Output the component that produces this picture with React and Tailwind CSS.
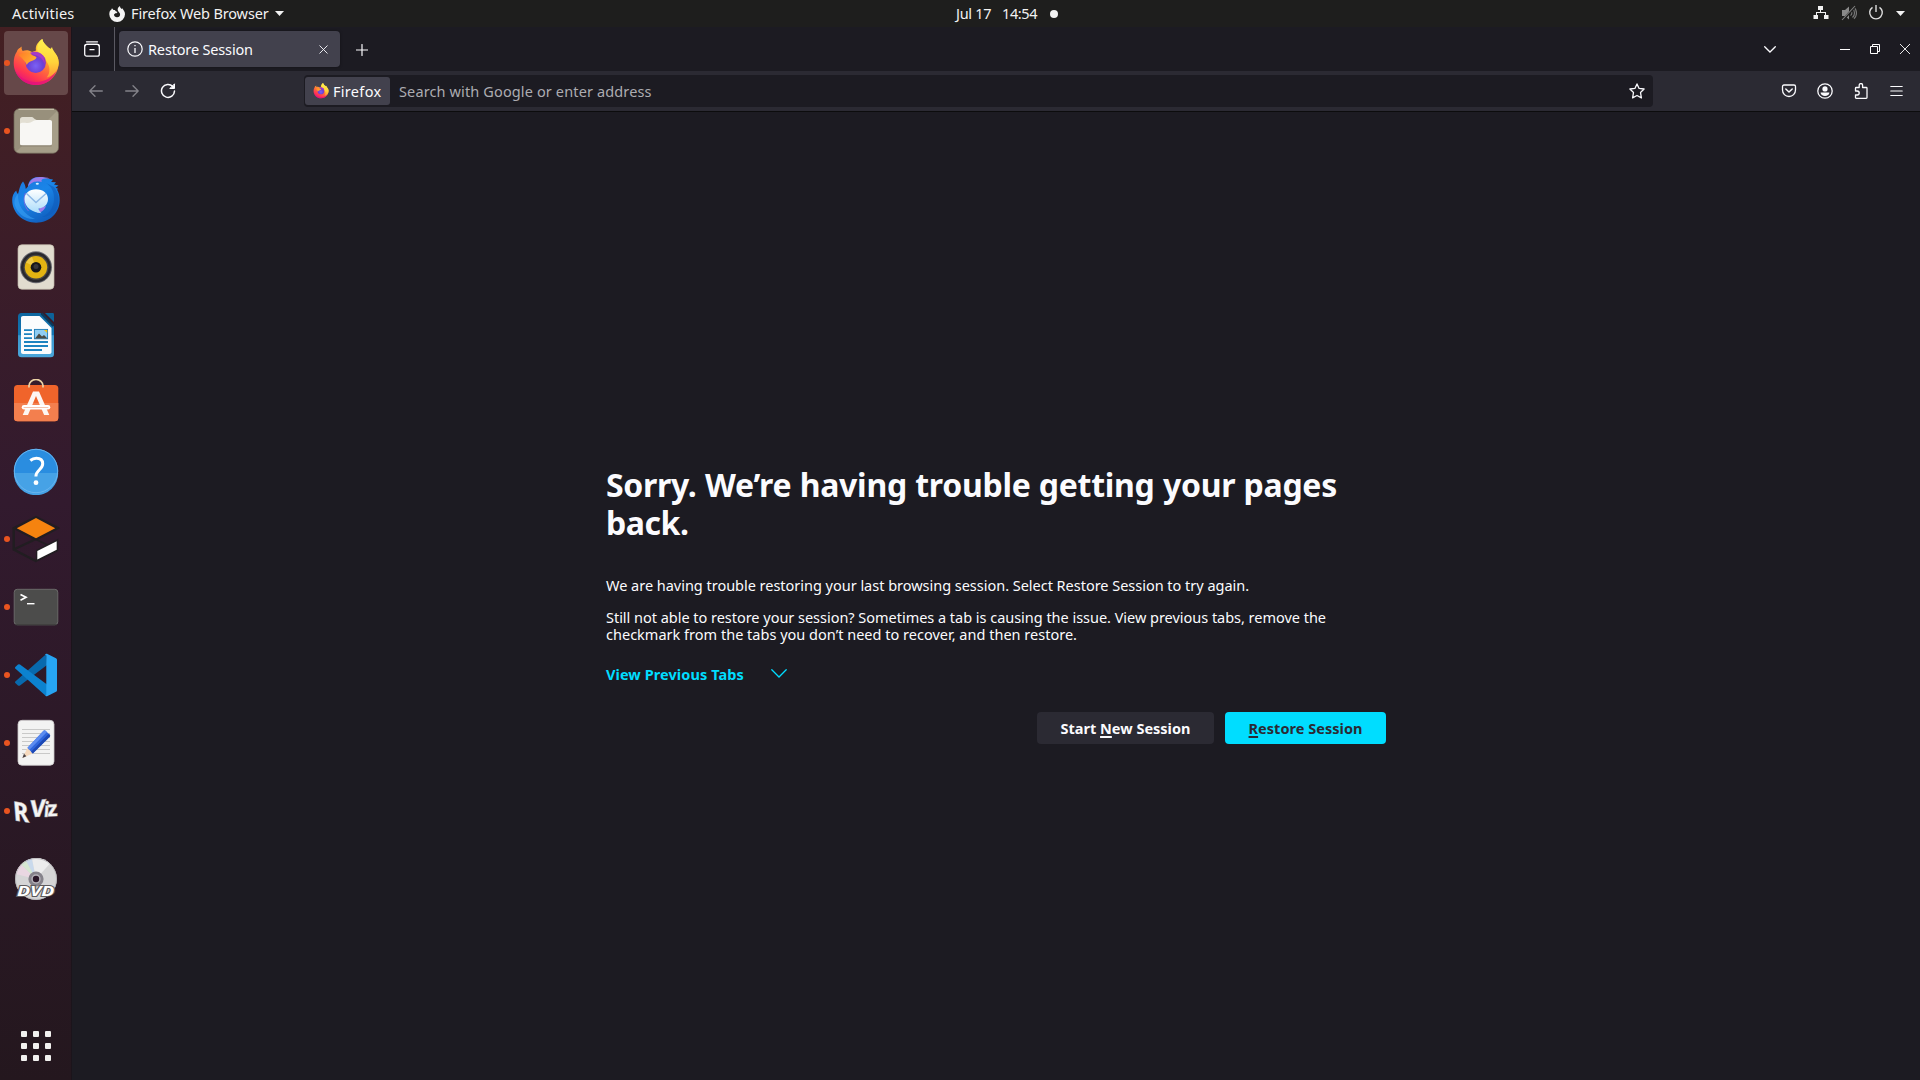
function FirefoxLogo({ size, id }) {
  return (
    <svg width={size} height={size} viewBox="0 0 48 48" className="shrink-0">
      <defs>
        <linearGradient id={`${id}-body`} x1="0.85" y1="0.05" x2="0.3" y2="1">
          <stop offset="0" stopColor="#fff44f" />
          <stop offset="0.3" stopColor="#ffbd2e" />
          <stop offset="0.55" stopColor="#ff7139" />
          <stop offset="0.8" stopColor="#ff3750" />
          <stop offset="1" stopColor="#e5127c" />
        </linearGradient>
        <radialGradient id={`${id}-globe`} cx="0.5" cy="0.65" r="0.65">
          <stop offset="0" stopColor="#7a62f5" />
          <stop offset="0.55" stopColor="#6d42d6" />
          <stop offset="1" stopColor="#a02bb4" />
        </radialGradient>
        <linearGradient id={`${id}-flame`} x1="0.5" y1="0" x2="0.5" y2="1">
          <stop offset="0" stopColor="#fff250" />
          <stop offset="0.6" stopColor="#ffd43a" />
          <stop offset="1" stopColor="#ff9a35" />
        </linearGradient>
        <linearGradient id={`${id}-head`} x1="0" y1="0" x2="1" y2="0.5">
          <stop offset="0" stopColor="#ff7a28" />
          <stop offset="1" stopColor="#ffb02e" />
        </linearGradient>
      </defs>
      <path
        d="M9.7 7.5c-.4 2 0 3.300 1 4.500C14 10.500 17 11 20 13l4-1.500c-1-4.500 2-8.700 6.300-11.500.6 3.500 3.200 5.600 6 8.500 2.200 1.300 4 2 5.200 4.500C45 15.500 46.700 19 46.700 23.500 46.700 36 36.500 46 24 46S1.700 36 1.700 24c0-4.600 1-8.300 3.200-11.500C5.300 10.500 7.500 9 9.700 7.500Z"
        fill={`url(#${id}-body)`}
      />
      <path d="M3 31c4 8 12 12 21 12 9.500 0 17-5 20.500-12C42 40 34 46 24 46S6 40 3 31Z" fill="#e2107f" opacity=".75" />
      <path
        d="M30.300 0c.6 3.500 3.200 5.600 6 8.500l2.200 1.500 1.500-2c.5 4 6.700 8 6.700 16-.2 7-5 13-12 14.500 3-3.500 3.700-9 1.300-13.500-2-4.500-5.500-8-9-10-3.500-4.500-1.500-11.500 3.300-15Z"
        fill={`url(#${id}-flame)`}
      />
      <circle cx="23.700" cy="23.800" r="10.200" fill={`url(#${id}-globe)`} />
      <path d="M17 14.500c4-2.500 9-2 12.500.5l4 4.500-2-.5c.8 1.500 1.500 4 1.200 6-1.500-5-5-8-9.700-9Z" fill="#a63bc6" />
      <path
        d="M6.500 16c3-2.500 8-3 12-1.800.6 1.300 1.500 2 4 2.800 1.200.5 1.900 1.200 2 1.700-.8 2-3.500 2.800-6.200 3.800-1.800.8-3 2-3.500 3.500-1-2.500-2.500-5-8.300-10Z"
        fill={`url(#${id}-head)`}
      />
    </svg>
  );
}

function FirefoxDockIcon() {
  return <FirefoxLogo size={48} id="ff-dock" />;
}

function FilesIcon() {
  return (
    <svg width="48" height="48" viewBox="0 0 48 48">
      <defs>
        <linearGradient id="files-bg" x1="0" y1="0" x2="1" y2="1">
          <stop offset="0.5" stopColor="#98907c" />
          <stop offset="0.52" stopColor="#a69e89" />
        </linearGradient>
      </defs>
      <rect x="2" y="1.700" width="44.500" height="44.500" rx="5.500" fill="url(#files-bg)" stroke="#6f6858" strokeWidth=".7" />
      <path d="M6.500 2.300h35.500" stroke="#c4bca6" strokeWidth="1.200" />
      <path d="M8 12.500C8 11 9 10 10.500 10h9.500c1.600 0 2.500 2.800 4.300 2.800V20H8Z" fill="#e3dfd3" />
      <path d="M8 17c1.500-1.800 3-1 8-1 4 0 5-3 8.500-3H38c1.300 0 2 .8 2 2v21.500c0 1.300-.8 2-2 2H10c-1.300 0-2-.8-2-2Z" fill="#f8f7f4" />
      <path d="M8.500 38.900h31" stroke="#7d7563" strokeWidth=".8" />
    </svg>
  );
}

function ThunderbirdIcon() {
  return (
    <svg width="48" height="48" viewBox="0 0 48 48">
      <defs>
        <linearGradient id="tb-body" x1="0" y1="0" x2="0.6" y2="1">
          <stop offset="0" stopColor="#1b76dc" />
          <stop offset="0.5" stopColor="#1a85e8" />
          <stop offset="1" stopColor="#1160c0" />
        </linearGradient>
        <linearGradient id="tb-mail" x1="0" y1="0" x2="0" y2="1">
          <stop offset="0" stopColor="#ffffff" />
          <stop offset="1" stopColor="#a9dcfb" />
        </linearGradient>
      </defs>
      <path
        d="M11 6.500c-3.500 4-3.500 8.500-5 12.500-1-1-1.500-2-1.800-3.500C1.500 18 .2 21 .2 25c0 13 11 22.700 24 22.700S47.700 38 47.700 25c0-4-.8-7-2.700-10.500l1.500-.5-3-1.300 3-2.200-4.500-1 2-2.300-5-.2c1-1 1.500-1.800 2-2.500l-5-.7C33.500 2.600 30 2 26 2 20.500 2 16.500 5.500 16 11.500L13.800 14C13.500 11 12.500 8 11 6.500Z"
        fill="url(#tb-body)"
      />
      <path d="M28 2c-6 0-10.500 3-12 9.500 3-3.500 5-4.800 9-5 2.500 0 3.500.5 5 0C28.500 5 30 3 38 3.500 35 2.500 31 2 28 2Z" fill="#9c7be8" />
      <path d="M34 8c6 4 8.500 9 8 17-.5 8-5 14-12 17 8-.5 14-5 16-12 1.500-7 0-13-4-18Z" fill="#0f5cba" opacity=".6" />
      <path d="M6 19c-.5 11 5 20 17 25-9 1-18-5-20.500-15C2 25 3.500 21 6 19Z" fill="#3aa0f4" opacity=".6" />
      <path d="M13.500 18c-2.500 6-1.500 13 3 18" fill="none" stroke="#7b6ae0" strokeWidth="1" />
      <path d="M34 31c-2 5-6 7-9.500 7 2-1.500 3-3 3-5Z" fill="#a07cec" />
      <path d="M24 14.300c7 0 12 4 12 9.700 0 6-5 9.500-9.500 9.500.3 2 1.500 3.800 3 4.700-8.500-.5-17-5.700-17-14 0-6 5-9.900 11.500-9.900Z" fill="url(#tb-mail)" />
      <path d="M14.500 18.500 24 27.500 34 18.500" fill="none" stroke="#8cb8e6" strokeWidth="1.400" />
      <ellipse cx="25.300" cy="8.700" rx="1.600" ry="1" fill="#d8f1ff" />
    </svg>
  );
}

function RhythmboxIcon() {
  return (
    <svg width="48" height="48" viewBox="0 0 48 48">
      <rect x="6" y="1.700" width="36" height="44.600" rx="4" fill="#e1dccf" stroke="#bdb6a7" strokeWidth=".7" />
      <circle cx="24" cy="24.300" r="16" fill="#6b6b72" />
      <circle cx="24" cy="24.300" r="15" fill="#28282d" />
      <circle cx="24" cy="24.300" r="12.500" fill="#4a4845" />
      <circle cx="24" cy="24.300" r="11.200" fill="#e3b412" />
      <path d="M24 24.300 14 19.500a11.200 11.200 0 0 1 6-5.500Z" fill="#f6d96b" opacity=".6" />
      <circle cx="24" cy="24.300" r="5.300" fill="#17171a" />
      <circle cx="24" cy="23.500" r="2.500" fill="#37373b" />
    </svg>
  );
}

function WriterIcon() {
  return (
    <svg width="48" height="48" viewBox="0 0 48 48">
      <defs>
        <linearGradient id="writer-bg" x1="0" y1="0" x2="0" y2="1">
          <stop offset="0" stopColor="#0d669f" />
          <stop offset="0.5" stopColor="#1477b4" />
          <stop offset="0.51" stopColor="#3a97cd" />
          <stop offset="1" stopColor="#4aa6da" />
        </linearGradient>
      </defs>
      <path d="M9.500 2h19L42 15.500V43a3.300 3.300 0 0 1-3.300 3.300H9.500A3.500 3.500 0 0 1 6 43V5.500A3.500 3.500 0 0 1 9.500 2Z" fill="url(#writer-bg)" />
      <path d="M33 2h7.500c1 0 1.500.5 1.500 1.500V11Z" fill="#0d6299" />
      <path d="m29.500 2.500 12 12.500" stroke="#0b3a5d" strokeWidth="2.500" />
      <path d="M11 5h16.500L39.500 17v24c0 1.200-.8 2-2 2H11c-1.200 0-2-.8-2-2V7c0-1.200.8-2 2-2Z" fill="#fbfcfd" />
      <path d="M12 19.200h8M12 23.200h8M12 27.200h8M12 31h24M12 35h24M12 39h18" stroke="#1c83c0" strokeWidth="1.800" />
      <rect x="22.400" y="18.400" width="13.200" height="9.400" fill="#8fcdf2" stroke="#1878b4" strokeWidth=".9" />
      <path d="m23 27.500 4-5 3 3 2-1.500 3.500 3.500Z" fill="#4a4a42" />
      <path d="M32 19h3.200v3Z" fill="#f4c20d" />
    </svg>
  );
}

function SoftwareIcon() {
  return (
    <svg width="48" height="48" viewBox="0 0 48 48">
      <path d="M17 8.500V7a7 6.500 0 0 1 14 0v1.500" fill="none" stroke="#ecd3a6" strokeWidth="1.700" />
      <rect x="2" y="6" width="44.300" height="36.300" rx="3.500" fill="#f0642b" />
      <path d="M2 24h44.300v14.800a3.500 3.500 0 0 1-3.500 3.500H5.500A3.500 3.500 0 0 1 2 38.800Z" fill="#f37f4e" />
      <path d="M17 6v2.500M31 6v2.500" stroke="#ecd3a6" strokeWidth="1.700" />
      <path d="M21 12.500h6L37.300 36h-5.200L24 17 16 36h-5.300Z" fill="#fdf6f2" />
      <path d="M12 28.300h24" stroke="#fff" strokeWidth="4.500" strokeLinecap="round" />
      <path d="M12 28.500h24" stroke="#f6c4ae" strokeWidth="1" strokeLinecap="round" />
    </svg>
  );
}

function HelpIcon() {
  return (
    <svg width="48" height="48" viewBox="0 0 48 48">
      <circle cx="24" cy="24" r="22.200" fill="#2a8de0" />
      <path d="M1.800 26h44.400a22.200 22.200 0 0 1-44.400 0Z" fill="#46a2e6" />
      <circle cx="24" cy="24" r="21.700" fill="none" stroke="#68b4ee" strokeWidth="1" />
      <path d="M18.300 13.500c2-1.600 4-2.200 6-2.200 4 0 6.400 2 6.400 5.500 0 6-6.800 6-6.800 12.700" fill="none" stroke="#fff" strokeWidth="3" />
      <circle cx="24" cy="35.700" r="2.400" fill="#fff" />
    </svg>
  );
}

function GazeboIcon() {
  return (
    <svg width="48" height="48" viewBox="0 0 48 48">
      <path
        d="M1.700 13v21.500L24.300 46.300M1.700 34.500 24 24M24 2 2 13l22 11.500L46 13Z"
        fill="none"
        stroke="#211d21"
        strokeWidth="2.400"
      />
      <path d="M24 24.500 38 31" stroke="#211d21" strokeWidth="1.600" />
      <path d="M25 35.500 45.500 25v10.500L24.500 46Z" fill="#211d21" stroke="#211d21" strokeWidth="1.500" />
      <path d="M24 3 43.200 13.200 24 23.200 4.800 13.200Z" fill="#f5830f" />
      <path d="M25.300 36 44.700 26.200v8.500L25.300 44.500Z" fill="#fff" />
    </svg>
  );
}

function TerminalIcon() {
  return (
    <svg width="48" height="48" viewBox="0 0 48 48">
      <rect x="2.200" y="6.300" width="43.600" height="35.500" rx="3" fill="#4c4c4b" stroke="#6e6e6d" strokeWidth=".9" />
      <path d="M3 41.800h42" stroke="#353534" strokeWidth="1" />
      <path d="m8.500 11.500 5.500 2.800-5.500 2.900" fill="none" stroke="#fff" strokeWidth="1.700" />
      <path d="M15 20.700h7.500" stroke="#fff" strokeWidth="1.400" />
    </svg>
  );
}

function CodeIcon() {
  return (
    <svg width="48" height="48" viewBox="0 0 48 48">
      <path d="M34 3.200 3.300 30.500q-.8.800 0 1.600L6 34.400q1 .7 2 0L35 14Z" fill="#0869ad" />
      <path d="M8 13.600q-1-.7-2 0L3.300 16q-.8.800 0 1.600L33 44.300q1 .7 2 .2V33.500Z" fill="#0c82cf" />
      <path d="M35 2.800 44 7.200q1 .6 1 1.600v30.400q0 1-1 1.600L35 45.200q-1.500.3-2-.9.800.3 1.300-.6V4.500q-.5-1-1.300-.7.500-1.200 2-1Z" fill="#27a4f2" />
    </svg>
  );
}

function EditorIcon() {
  return (
    <svg width="48" height="48" viewBox="0 0 48 48">
      <rect x="6" y="1.300" width="36" height="45" rx="4" fill="#f3f3f2" stroke="#c9c7c8" strokeWidth=".8" />
      <path d="M10 10.500h28M10 14.500h28M10 18.500h28M10 22.500h28M10 26.500h28M10 30.500h28M10 34.500h28" stroke="#c9c9c8" strokeWidth="1" />
      <path d="M15.500 28.700 20.500 34.500 10.500 39Z" fill="#f6d9bd" />
      <path d="m12 34.800 2.400 2.500-4 1.700Z" fill="#4a4244" />
      <path d="M15.500 28.700 31.500 11.700q1-.8 2 0l4.300 4q.8 1 0 2L20.800 34.500Z" fill="#2f66dc" />
      <path d="M15.500 28.700 31.500 11.700l1.700-.2 1.800 1.600L17.200 30.900Z" fill="#5c8cf0" />
      <path d="M19 32.700 36.500 15l1.300.8q.8 1 0 2L20.800 34.500Z" fill="#1d49b5" />
    </svg>
  );
}

function RvizIcon() {
  return (
    <svg width="48" height="48" viewBox="0 0 48 48">
      <g fontFamily="'Noto Sans', sans-serif" fontWeight="800" fill="#f4f4f4" stroke="#a39fa4" strokeWidth=".4">
        <text transform="matrix(.86 .12 .08 1 2 33.500)" fontSize="27">R</text>
        <text transform="matrix(.98 -.08 -.06 1 17.500 30.500)" fontSize="24">V</text>
        <text transform="matrix(.8 0 -.08 1 31.500 29.500)" fontSize="21">i</text>
        <text transform="matrix(.95 -.04 .05 1 35.500 29.500)" fontSize="22">z</text>
      </g>
    </svg>
  );
}

function DvdIcon() {
  return (
    <svg width="48" height="48" viewBox="0 0 48 48">
      <circle cx="24" cy="24" r="20.900" fill="#d5d5d6" />
      <path d="M24 24 3.700 19A21 21 0 0 1 9 9.300Z" fill="#e9d7e2" />
      <path d="M24 24 9 9.300A21 21 0 0 1 14 5.600Z" fill="#d6e8d2" />
      <path d="M24 24 14 5.600A21 21 0 0 1 20 3.500Z" fill="#c9d9ec" />
      <path d="M24 24 20 3.500A21 21 0 0 1 38 8.500Z" fill="#ececed" />
      <circle cx="24" cy="24" r="20.500" fill="none" stroke="#b4b4b6" strokeWidth=".8" />
      <circle cx="24" cy="24" r="7.600" fill="#85828a" />
      <circle cx="24" cy="24" r="4.700" fill="#b4b1b8" />
      <circle cx="24" cy="24" r="3.200" fill="#2b1829" />
      <text
        x="5"
        y="41"
        textLength="37.500"
        lengthAdjust="spacingAndGlyphs"
        fontFamily="'Noto Sans', sans-serif"
        fontWeight="700"
        fontStyle="italic"
        fontSize="13.500"
        fill="#fff"
        stroke="#5c5a5c"
        strokeWidth="1.800"
        paintOrder="stroke"
      >
        DVD
      </text>
    </svg>
  );
}

const DOCK_APPS = [
  { name: 'Firefox', Icon: FirefoxDockIcon, running: true, active: true },
  { name: 'Files', Icon: FilesIcon, running: true },
  { name: 'Thunderbird', Icon: ThunderbirdIcon },
  { name: 'Rhythmbox', Icon: RhythmboxIcon },
  { name: 'Writer', Icon: WriterIcon },
  { name: 'Software', Icon: SoftwareIcon },
  { name: 'Help', Icon: HelpIcon },
  { name: 'Gazebo', Icon: GazeboIcon, running: true },
  { name: 'Terminal', Icon: TerminalIcon, running: true },
  { name: 'Code', Icon: CodeIcon, running: true },
  { name: 'Text Editor', Icon: EditorIcon, running: true },
  { name: 'RViz', Icon: RvizIcon, running: true },
  { name: 'DVD', Icon: DvdIcon },
];

function Dock() {
  return (
    <nav className="flex w-[72px] shrink-0 flex-col border-r border-[#1b141b] bg-linear-to-b from-[#441f22] via-[#321a2e] via-45% to-[#24171e] pt-1">
      <div className="flex flex-col gap-1">
        {DOCK_APPS.map(({ name, Icon, running, active }) => (
          <div key={name} className="relative flex h-16 w-full items-center pl-1" aria-label={name}>
            <div className={active ? 'flex size-16 items-center justify-center rounded bg-[#664849]' : 'flex size-16 items-center justify-center'}>
              <Icon />
            </div>
            {running && <span className="absolute top-[29px] left-1 size-1.5 rounded-full bg-[#e95420]" />}
          </div>
        ))}
      </div>
      <div className="mt-auto mb-[19px] ml-[21px] grid grid-cols-3 gap-1.5 self-start">
        {Array.from({ length: 9 }, (_, i) => (
          <span key={i} className="size-1.5 rounded-[1px] bg-[#f2f1ef]" />
        ))}
      </div>
    </nav>
  );
}

function TopBar() {
  return (
    <header className="flex h-[27px] shrink-0 items-center bg-[#1e1e1d] leading-[27px] text-[#f2f2f2]">
      <span className="ml-3 w-[97px] tracking-[0.2px]">Activities</span>
      <svg width="16" height="16" viewBox="0 0 16 16" fill="#f4f4f4">
        <path d="M3 2.200 4.500 4h1.300l1 1.300L8.500 6 7.500 7.200H6.300L5 8.500c0 1.700 1.400 2.800 3 2.800a3 3 0 0 0 3.100-3C11.100 6.500 9 6 8.700 4 8.500 2.300 9.500 1 11 0c0 1.500.7 2 1.700 3l.8-.7c.2 1 1 1.600 1.600 2.700.6 1 .9 2 .9 3.300A7.800 7.800 0 0 1 8.100 16 7.800 7.800 0 0 1 .3 8.300C.3 6 1 4.500 1.600 3.700V5Z" />
      </svg>
      <span className="ml-1.5 w-[144px] tracking-[-0.14px]">Firefox Web Browser</span>
      <svg width="10" height="5" viewBox="0 0 10 5" fill="#f2f2f2">
        <path d="M0 0h9L4.500 5Z" />
      </svg>
      <span className="ml-[671px] w-[46px] tracking-[-0.3px]">Jul 17</span>
      <span className="w-[48px] tracking-[-0.4px]">14:54</span>
      <span className="size-2 rounded-full bg-[#f2f2f2]" />
      <div className="mr-[15px] ml-auto flex items-center">
        <svg width="16" height="16" viewBox="0 0 16 16" className="mr-3 -mt-0.5" fill="#f2f2f2">
          <path d="M5 1h5v4H8v2h5v3h2.500v4H11v-4h1V8H4v2h1v4H.500v-4H3V7h4V5H5Z" />
        </svg>
        <svg width="16" height="16" viewBox="0 0 16 16" className="mr-[11px] -mt-0.5" fill="#8a8a8a">
          <path d="M1 5h3l4-3.500v13L4 11H1Z" />
          <path d="M9.500 5.500a3 3 0 0 1 0 5M11.500 3.500a6 6 0 0 1 0 9M13 2.200a8 8 0 0 1 0 11.600" fill="none" stroke="#777" strokeWidth="1.200" />
          <path d="M14.500 1 1.500 15.500" stroke="#1e1e1d" strokeWidth="2.500" />
          <path d="M14 1 1 15" stroke="#858585" strokeWidth="1.100" />
        </svg>
        <svg width="16" height="16" viewBox="0 0 16 16" className="mr-3 -mt-0.5" fill="none" stroke="#dedede" strokeWidth="1.400">
          <path d="M4.500 2.300a6.300 6.300 0 1 0 7 0M8 0v7" />
        </svg>
        <svg width="9" height="5" viewBox="0 0 9 5" fill="#f2f2f2">
          <path d="M0 0h9L4.500 5Z" />
        </svg>
      </div>
    </header>
  );
}

function TabStrip() {
  return (
    <div className="flex h-11 items-center bg-[#1c1b22] text-[#fbfbfe]">
      <svg width="16" height="16" viewBox="0 0 16 16" className="ml-3" fill="none" stroke="#fbfbfe" strokeWidth="1.300">
        <path d="M2.500.8h11" strokeLinecap="round" />
        <rect x=".7" y="3.400" width="14.600" height="11.800" rx="2" />
        <path d="M1 5.200C1 4 2 3.400 3 3.400h10c1 0 2 .6 2 1.800" />
        <path d="M6 8.700h4" strokeLinecap="round" />
      </svg>
      <span className="ml-3.5 h-11 w-px bg-[#5a5962]" />
      <div className="ml-1 flex h-9 w-[221px] items-center rounded bg-[#42414d] pl-2 shadow-[0_0_3px_rgba(0,0,0,0.4)]">
        <svg width="16" height="16" viewBox="0 0 16 16" fill="none" stroke="#fbfbfe" strokeWidth="1.200">
          <circle cx="8" cy="8" r="7.200" />
          <path d="M8 7v5M8 4v1.300" strokeWidth="1.300" />
        </svg>
        <span className="ml-[5px] w-[167px] pt-0.5 tracking-[-0.16px]">Restore Session</span>
        <svg width="9" height="9" viewBox="0 0 9 9" stroke="#fbfbfe" strokeWidth=".9" className="ml-1">
          <path d="m.5.5 8 8M8.500.5l-8 8" />
        </svg>
      </div>
      <svg width="12" height="12" viewBox="0 0 12 12" stroke="#fbfbfe" strokeWidth="1.200" className="mt-px ml-4" strokeLinecap="round">
        <path d="M6 .5v11M.500 6h11" />
      </svg>
      <div className="mr-2.5 ml-auto flex items-center">
        <svg width="12" height="7" viewBox="0 0 12 7" fill="none" stroke="#fbfbfe" strokeWidth="1.300" strokeLinecap="round" className="mr-16">
          <path d="m.7.7 5.300 5.300L11.300.7" />
        </svg>
        <span className="mr-5 h-px w-2.5 bg-white" />
        <svg width="10" height="10" viewBox="0 0 10 10" fill="none" stroke="#fff" className="mr-5">
          <path d="M.5 2.500h7v7h-7ZM2.500 2.500v-2h7v7h-2" />
        </svg>
        <svg width="10" height="10" viewBox="0 0 10 10" stroke="#fff" strokeWidth=".9">
          <path d="m0 0 10 10M10 0 0 10" />
        </svg>
      </div>
    </div>
  );
}

function Toolbar() {
  return (
    <div className="flex h-[41px] items-center border-b border-[#0c0c0d] bg-[#2b2a33] text-[#fbfbfe]">
      <svg width="14" height="12" viewBox="0 0 14 12" fill="none" stroke="#84838a" strokeWidth="1.300" strokeLinecap="round" strokeLinejoin="round" className="ml-[17px]">
        <path d="M13.300 6H.8M6 .7.800 6 6 11.300" />
      </svg>
      <svg width="14" height="12" viewBox="0 0 14 12" fill="none" stroke="#84838a" strokeWidth="1.300" strokeLinecap="round" strokeLinejoin="round" className="ml-[22px]">
        <path d="M.7 6h12.500M8 .7 13.200 6 8 11.300" />
      </svg>
      <svg width="16" height="16" viewBox="0 0 16 16" fill="none" stroke="#fbfbfe" strokeWidth="1.500" strokeLinecap="round" strokeLinejoin="round" className="ml-[21px]">
        <path d="M12.800 3.500A6.500 6.500 0 1 0 14.500 8" />
        <path d="M14.500 1.200v4.300h-4.300Z" fill="#fbfbfe" strokeWidth="1" />
      </svg>
      <div className="ml-32 flex h-8 w-[1349px] items-center rounded bg-[#1c1b22] pr-2">
        <div className="ml-px flex h-7 w-[85px] items-center rounded-[3px] bg-[#42414d] pl-2">
          <FirefoxLogo size={16} id="ff-chip" />
          <span className="ml-1 pt-0.5 tracking-[0.3px]">Firefox</span>
        </div>
        <span className="ml-[9px] pt-0.5 tracking-[0.13px] text-[#acacb1]">Search with Google or enter address</span>
        <svg width="16" height="16" viewBox="0 0 16 16" fill="none" stroke="#fbfbfe" strokeWidth="1.300" strokeLinejoin="round" className="ml-auto">
          <path d="m8 .900 2.100 4.500 5 .600-3.600 3.500.9 5.400L8 12.500l-4.400 2.400.9-5.400L.9 6l5-.6Z" />
        </svg>
      </div>
      <div className="mr-[17px] ml-auto flex items-center">
        <svg width="16" height="16" viewBox="0 0 16 16" fill="none" stroke="#fbfbfe" strokeWidth="1.300" strokeLinecap="round" strokeLinejoin="round" className="mr-5">
          <path d="M3 2h10c.9 0 1.500.6 1.500 1.500V7a6.500 6.500 0 0 1-13 0V3.500C1.500 2.600 2.100 2 3 2Z" />
          <path d="M4.800 6 8 9l3.200-3" strokeWidth="1.500" />
        </svg>
        <svg width="16" height="16" viewBox="0 0 16 16" className="mr-5">
          <circle cx="8" cy="8" r="7.200" fill="none" stroke="#fbfbfe" strokeWidth="1.300" />
          <circle cx="8" cy="5.900" r="2.600" fill="#fbfbfe" />
          <path d="M3.600 9.500h8.800c0 2-2 3.600-4.400 3.600S3.600 11.500 3.600 9.500Z" fill="#fbfbfe" />
        </svg>
        <svg width="16" height="16" viewBox="0 0 16 16" fill="none" stroke="#fbfbfe" strokeWidth="1.300" strokeLinejoin="round" className="mr-[21px]">
          <path d="M2.500 8V5.200c0-.4.300-.7.700-.7h3V2.200a1.700 1.700 0 0 1 3.400 0v2.300h3.600c.5 0 .8.300.8.700v9.300c0 .5-.3.800-.8.800H3.300c-.5 0-.8-.3-.8-.8V12h1.700c2.700-.2 2.700-3.800 0-4Z" />
        </svg>
        <svg width="13" height="12" viewBox="0 0 13 12" stroke="#fbfbfe" strokeWidth="1.200" strokeLinecap="round" className="-mt-px">
          <path d="M.8 1.500h11.400M.8 6h11.400M.8 10.500h11.400" />
        </svg>
      </div>
    </div>
  );
}

function RestorePage() {
  return (
    <main className="flex-1 bg-[#1c1b22] pt-[354px] pl-[534px] leading-[17px] whitespace-nowrap text-[#fbfbfe]">
      <div className="w-[780px]">
        <h1 className="text-[32px] leading-[38px] font-bold">
          <span className="block tracking-[-0.29px] [word-spacing:0.4px]">Sorry. We’re having trouble getting your pages</span>
          <span className="block tracking-[-0.45px]">back.</span>
        </h1>
        <p className="mt-[35px] tracking-[-0.02px]">
          We are having trouble restoring your last browsing session. Select Restore Session to try again.
        </p>
        <p className="mt-[15px]">
          <span className="block tracking-[-0.025px]">
            Still not able to restore your session? Sometimes a tab is causing the issue. View previous tabs, remove the
          </span>
          <span className="block tracking-[0.01px]">checkmark from the tabs you don’t need to recover, and then restore.</span>
        </p>
        <button className="mt-[23px] flex items-center font-bold tracking-[0.08px] text-[#00ddff]">
          <span className="w-[165px] text-left">View Previous Tabs</span>
          <svg width="16" height="9" viewBox="0 0 16 9" fill="none" stroke="#00ddff" strokeWidth="1.300" strokeLinecap="round" className="-mt-0.5">
            <path d="m.8.8 7.200 7.200 7.200-7.200" />
          </svg>
        </button>
        <div className="mt-[29px] flex justify-end gap-[11px] font-bold">
          <button className="h-8 w-[177px] rounded bg-[#2b2a33]">
            Start <span className="underline decoration-2 underline-offset-2">N</span>ew Session
          </button>
          <button className="h-8 w-[161px] rounded bg-[#00ddff] tracking-[0.03px] text-[#2b2a33]">
            <span className="underline decoration-2 underline-offset-2">R</span>estore Session
          </button>
        </div>
      </div>
    </main>
  );
}

export default function App() {
  return (
    <div className="flex h-[1080px] w-[1920px] flex-col overflow-hidden bg-[#1c1b22] font-['Noto_Sans',sans-serif] text-[14.5px] whitespace-nowrap">
      <TopBar />
      <div className="flex flex-1">
        <Dock />
        <div className="flex flex-1 flex-col">
          <TabStrip />
          <Toolbar />
          <RestorePage />
        </div>
      </div>
    </div>
  );
}
